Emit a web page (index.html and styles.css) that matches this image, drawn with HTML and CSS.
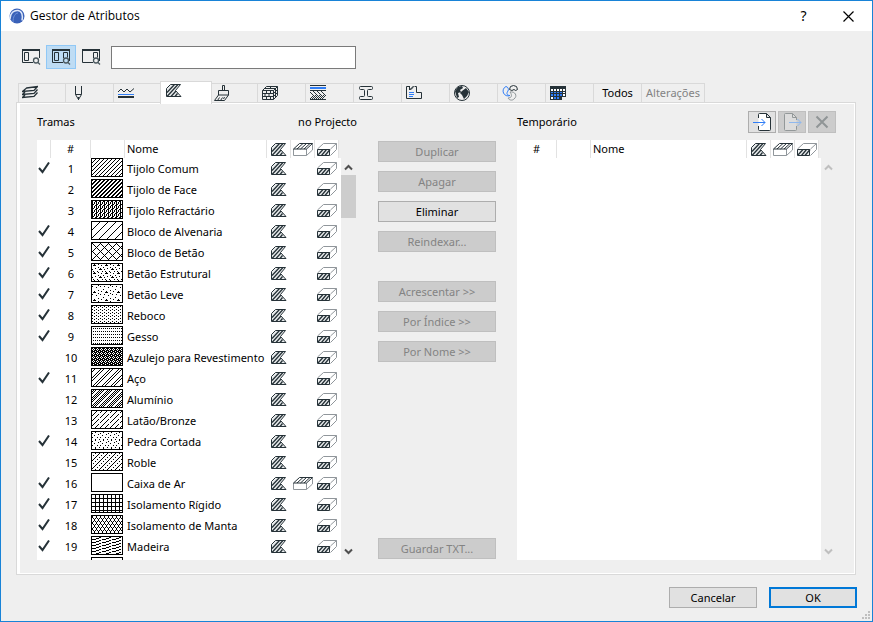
FILE: index.html
```html
<!DOCTYPE html>
<html lang="pt">
<head>
<meta charset="utf-8">
<title>Gestor de Atributos</title>
<link rel="stylesheet" href="styles.css">
</head>
<body>
<svg class="defs" aria-hidden="true">
  <defs>
    <symbol id="check" viewBox="0 0 12 12"><path d="M1 6l3.500 4L11 .5" fill="none" stroke="#263238" stroke-width="2"/></symbol>
    <symbol id="hatch" viewBox="0 0 16 13">
      <path d="M4.500.5h10l-5 6 5.500 6H.5v-8z" fill="#e9eced" stroke="#263238"/>
      <path d="M1 8.500l7.500-8M1 12.500l11-12M5 12.500l5-5.500M9 12.500l2.500-3" fill="none" stroke="#263238" stroke-width="1.300"/>
    </symbol>
    <symbol id="cover" viewBox="0 0 20 13">
      <path d="M.5 6v6.500h13V6M13.500 12.500l6-5.500V.5" fill="#fff" stroke="#90969b"/>
      <path d="M6.500.5h13l-6 5.500H.5z" fill="#fff" stroke="#263238"/>
      <path d="M4 6l6-5.500M7.500 6l6-5.500M11 6l6-5.500" stroke="#263238"/>
    </symbol>
    <symbol id="cut" viewBox="0 0 20 13">
      <path d="M.5 6l6-5.500h13v6l-6 6M13.500 6l6-5.500" fill="#fff" stroke="#90969b"/>
      <path d="M.5 6.500h12v6H.5z" fill="#e9eced" stroke="#263238"/>
      <path d="M1 12l5-5.500M4.500 12.500l5-6M8 12.500l5-6" stroke="#263238" stroke-width="1.300"/>
    </symbol>
    <symbol id="up" viewBox="0 0 9 7"><path d="M1 5.500l3.500-3.500L8 5.500" fill="none" stroke="currentColor" stroke-width="2"/></symbol>
    <symbol id="down" viewBox="0 0 9 7"><path d="M1 1.500L4.500 5 8 1.500" fill="none" stroke="currentColor" stroke-width="2"/></symbol>

    <pattern id="f1" width="4" height="4" patternUnits="userSpaceOnUse"><path d="M0 3h1v1H0zM1 2h1v1H1zM2 1h1v1H2zM3 0h1v1H3z"/></pattern>
    <pattern id="f2" width="4" height="4" patternUnits="userSpaceOnUse"><path d="M0 3h2v1H0zM1 2h2v1H1zM2 1h2v1H2zM3 0h1v1H3zM0 0h1v1H0z"/></pattern>
    <pattern id="f3" width="4" height="4" patternUnits="userSpaceOnUse"><path d="M0 0h1v4H0zM1 3h1v1H1zM2 1h1v2H2zM3 0h1v1H3z"/></pattern>
    <pattern id="f4" width="8" height="8" patternUnits="userSpaceOnUse"><path d="M0 7h1v1H0zM1 6h1v1H1zM2 5h1v1H2zM3 4h1v1H3zM4 3h1v1H4zM5 2h1v1H5zM6 1h1v1H6zM7 0h1v1H7z"/></pattern>
    <pattern id="f5" width="8" height="8" patternUnits="userSpaceOnUse"><path d="M0 0h1v1H0zM1 1h1v1H1zM2 2h1v1H2zM3 3h1v1H3zM4 4h1v1H4zM5 5h1v1H5zM6 6h1v1H6zM7 7h1v1H7zM1 7h1v1H1zM2 6h1v1H2zM3 5h1v1H3zM5 3h1v1H5zM6 2h1v1H6zM7 1h1v1H7z"/></pattern>
    <pattern id="f6" width="12" height="8" patternUnits="userSpaceOnUse"><path d="M1 1h3v1H1zM2 0h1v1H2zM6 0h1v1H6zM9 1h1v1H9zM7 5h3v1H7zM8 4h1v1H8zM11 3h1v1h-1zM0 5h1v1H0zM3 4h1v1H3zM5 7h1v1H5zM1 7h1v1H1zM6 3h1v1H6zM10 7h1v1h-1z"/></pattern>
    <pattern id="f7" width="12" height="8" patternUnits="userSpaceOnUse"><path d="M2 6h1v1H2zM1 7h3v1H1zM8 1h1v1H8zM9 6h1v1H9zM6 5h1v1H6zM0 1h1v1H0zM4 2h1v1H4zM11 4h1v1h-1zM6 0h1v1H6z"/></pattern>
    <pattern id="f8" width="4" height="3" patternUnits="userSpaceOnUse"><path d="M0 0h1v1H0zM2 1h1v1H2z"/></pattern>
    <pattern id="f9" width="2" height="3" patternUnits="userSpaceOnUse"><path d="M1 1h1v1H1z"/></pattern>
    <pattern id="f10" width="4" height="4" patternUnits="userSpaceOnUse"><path d="M0 0h4v4H0z"/><path d="M1 0h1v1H1zM0 1h1v1H0zM2 1h1v1H2zM1 2h1v1H1zM3 3h1v1H3z" fill="#fff"/></pattern>
    <pattern id="f11" width="9" height="9" patternUnits="userSpaceOnUse"><path d="M0 8h1v1H0zM1 7h1v1H1zM2 6h1v1H2zM3 5h1v1H3zM4 4h1v1H4zM5 3h1v1H5zM6 2h1v1H6zM7 1h1v1H7zM8 0h1v1H8zM3 8h1v1H3zM4 7h1v1H4zM5 6h1v1H5zM6 5h1v1H6zM7 4h1v1H7zM8 3h1v1H8zM0 2h1v1H0zM1 1h1v1H1zM2 0h1v1H2z"/></pattern>
    <pattern id="f12" width="8" height="8" patternUnits="userSpaceOnUse"><path d="M0 7h1v1H0zM1 6h1v1H1zM2 5h1v1H2zM3 4h1v1H3zM4 3h1v1H4zM5 2h1v1H5zM6 1h1v1H6zM7 0h1v1H7zM2 7h1v1H2zM3 6h1v1H3zM4 5h1v1H4zM5 4h1v1H5zM6 3h1v1H6zM7 2h1v1H7zM0 1h1v1H0zM1 0h1v1H1zM4 7h1v1H4zM5 6h1v1H5zM6 5h1v1H6zM7 4h1v1H7zM0 3h1v1H0zM1 2h1v1H1zM2 1h1v1H2zM3 0h1v1H3z"/></pattern>
    <pattern id="f13" width="10" height="5" patternUnits="userSpaceOnUse"><path d="M0 4h1v1H0zM1 3h1v1H1zM2 2h1v1H2zM3 1h1v1H3zM4 0h1v1H4zM5 4h1v1H5zM6 3h1v1H6zM8 1h1v1H8zM9 0h1v1H9z"/></pattern>
    <pattern id="f14" width="8" height="8" patternUnits="userSpaceOnUse"><path d="M0 1h1v1H0zM3 0h1v1H3zM6 2h1v1H6zM2 3h1v1H2zM5 5h1v1H5zM0 5h1v1H0zM3 7h1v1H3zM7 7h1v1H7z"/></pattern>
    <pattern id="f15" width="8" height="8" patternUnits="userSpaceOnUse"><path d="M0 7h1v1H0zM1 6h1v1H1zM2 5h1v1H2zM3 4h1v1H3zM4 3h1v1H4zM5 2h1v1H5zM6 1h1v1H6zM7 0h1v1H7zM1 2h1v1H1zM3 0h1v1H3zM5 6h1v1H5zM7 4h1v1H7z"/></pattern>
    <pattern id="f17" width="4" height="4" patternUnits="userSpaceOnUse"><path d="M3 0h1v4H3zM0 3h4v1H0z"/></pattern>
    <pattern id="f18" width="4" height="6" patternUnits="userSpaceOnUse"><path d="M0 0h1v2H0zM1 2h1v1H1zM2 3h1v2H2zM1 5h1v1H1zM3 2h1v1H3zM3 5h1v1H3z"/></pattern>
    <pattern id="f19" width="10" height="3" patternUnits="userSpaceOnUse"><path d="M0 2h4v1H0zM4 1h3v1H4zM7 0h2v1H7z"/></pattern>
  </defs>
</svg>

<div class="window">
  <header class="titlebar">
    <svg class="logo" viewBox="0 0 16 16"><circle cx="8" cy="8" r="7.500" fill="#3961b8"/><path d="M1 11C1 5 5 2 9 2.500c4 .5 5 5 4 10" fill="none" stroke="#dfe8fa" stroke-width="1.500"/><path d="M4 14C4 9 6 5 9 5" fill="none" stroke="#6f92da"/></svg>
    <h1>Gestor de Atributos</h1>
    <button class="caption help" type="button">?</button>
    <button class="caption" type="button" aria-label="Fechar"><svg width="11" height="11" viewBox="0 0 11 11"><path d="M.5.5l10 10M10.500.5l-10 10" stroke="#000" stroke-width="1.200"/></svg></button>
  </header>

  <div class="toolbar">
    <button class="view" type="button" aria-label="Esquerda"><svg viewBox="0 0 19 16"><path d="M11 13.500H.5V1h17v8" /><path d="M0 1h18" class="thick"/><path d="M2.500 3.500h4v8h-4z"/><g class="lens"><circle cx="14" cy="11.500" r="2.500"/><path d="M16 13.500l2 2"/></g></svg></button>
    <button class="view on" type="button" aria-label="Ambos"><svg viewBox="0 0 19 16"><path d="M11 13.500H.5V1h17v11"/><path d="M0 1h18" class="thick"/><path d="M2.500 3.500h4v8h-4zM11.500 9V3.500h4v5"/><g class="lens"><circle cx="14" cy="11.500" r="2.500"/><path d="M16 13.500l2 2"/></g></svg></button>
    <button class="view" type="button" aria-label="Direita"><svg viewBox="0 0 19 16"><path d="M11 13.500H.5V1h17v11"/><path d="M0 1h18" class="thick"/><path d="M11.500 9V3.500h4v5"/><g class="lens"><circle cx="14" cy="11.500" r="2.500"/><path d="M16 13.500l2 2"/></g></svg></button>
    <input class="search" type="text" aria-label="Procurar">
  </div>

  <nav class="tabs">
    <button class="tab first" type="button" aria-label="Camadas"><svg viewBox="0 0 16 16"><path d="M4.500 3l11-1.500-3.500 4-11.500 1zM3 7L.5 9.500l11.500-1 3.500-4M3 10L.5 12.500l11.500-1 3.500-4" stroke-width="1.300"/></svg></button>
    <button class="tab" type="button" aria-label="Canetas"><svg viewBox="0 0 16 16"><path d="M5.500 1v8.500l3 5 3-5V1M5.500 9.500h6"/><path d="M8.500 12v3"/></svg></button>
    <button class="tab" type="button" aria-label="Linhas"><svg viewBox="0 0 16 16"><path d="M0 7l3-3 3 3 3-3 3 3 4-3.500"/><path d="M0 9.500h16" class="blue"/><path d="M0 12h16" class="thick"/></svg></button>
    <button class="tab active" type="button" aria-label="Tramas"><svg viewBox="0 0 16 16"><use href="#hatch" width="16" height="13" y="1"/></svg></button>
    <button class="tab" type="button" aria-label="Superfícies"><svg viewBox="0 0 16 16"><path d="M8.500 5.500v-5h2v5M4.500 10V5.500h10V10zM4.500 10l-4 5.500h10l4-5.500M3.500 15.500l2-3M6.500 15.500l2-3M9.500 14l1-2"/></svg></button>
    <button class="tab" type="button" aria-label="Materiais"><svg viewBox="0 0 16 16"><path d="M.5 5.500h11v9H.5zM.5 5.500l4-4h11l-4 4M15.500 1.500v9l-4 4M.5 8.500h11l4-4M.5 11.500h11l4-4M4.500 5.500v3M8.500 5.500v3M3 8.500v3M7 8.500v3M4.500 11.500v3M8.500 11.500v3M13.500 3.500v9M3 3.500h10M7.500 3.500l2-2"/></svg></button>
    <button class="tab" type="button" aria-label="Compostos"><svg viewBox="0 0 16 16"><path d="M0 .5h16M0 5.500h16M0 14.500h16"/><path d="M0 3h16" class="blue thick"/><path d="M0 7l3 3M3 6l4 4M7 6l4 4M11 6l4 4M0 14l4-4M4 14l4-4M8 14l4-4M12 14l4-4M2 14l4-4M6 14l4-4M10 14l4-4"/></svg></button>
    <button class="tab" type="button" aria-label="Perfis"><svg viewBox="0 0 16 16"><path d="M1.500 2.500q0-1 1-1h11q1 0 1 1v1q0 1-1 1h-3q-1 0-1 1v5q0 1 1 1h3q1 0 1 1v1q0 1-1 1h-11q-1 0-1-1v-1q0-1 1-1h3q1 0 1-1v-5q0-1-1-1h-3q-1 0-1-1z"/></svg></button>
    <button class="tab" type="button" aria-label="Zonas"><svg viewBox="0 0 16 16"><path d="M3.500 1.500h-3v12h15v-6h-5v-6h-2M3.500 1v4l4-4M3.500 4.500q3 0 4-3"/><path d="M3 7.500h5M3 9.500h5M3 11.500h4" class="blue"/></svg></button>
    <button class="tab" type="button" aria-label="Cidades"><svg viewBox="0 0 16 16"><circle cx="8" cy="8" r="7.500"/><path class="solid" d="M1 6l3-4 4-1 1 2-3 2 1 2-3 1 1 4-2 1zM8 6l4-3 3 4-2 4-3 3-2-4-2-2z"/></svg></button>
    <button class="tab" type="button" aria-label="Categorias"><svg viewBox="0 0 16 16"><path class="blue" d="M4 1.500a4 4 0 1 0 4 9c-3 0-4-2-2-4.500C7 4 6 2 4 1.500z"/><path d="M7.500 4.500a4 4 0 0 1 8 0q-2 2-3.500 0-2 2-4.500 0z"/><path class="gray" d="M8 7c5-1 8 4 4 7-2 2-5 1-6-1 3 0 5-2 2-6z"/></svg></button>
    <button class="tab" type="button" aria-label="Horários"><svg viewBox="0 0 16 16"><path d="M0 1h16v11h-4v3H0z" class="solid"/><path d="M1 4h2v2H1zM4 4h2v2H4zM7 4h2v2H7zM10 4h2v2h-2zM13 4h2v2h-2zM13 7h2v1h-2zM1 12h2v2H1zM13 9h2v2h-2z" fill="#fff" stroke="none"/><path d="M1 7h2v1H1zM4 7h2v1H4zM7 7h2v1H7zM10 7h2v1h-2zM1 9h2v2H1zM4 9h2v2H4zM7 9h2v2H7zM10 9h2v2h-2zM4 12h2v2H4zM7 12h2v2H7z" fill="#2f7df6" stroke="none"/></svg></button>
    <button class="tab text" type="button">Todos</button>
    <button class="tab text last" type="button" disabled>Alterações</button>
  </nav>

  <main class="panel">
    <section class="side">
      <div class="side-head"><h2>Tramas</h2><h2>no Projecto</h2></div>
      <div class="list">
        <div class="viewport">
          <table>
            <colgroup><col class="c-check"><col class="c-num"><col class="c-swatch"><col><col class="c-icon"><col class="c-icon"><col class="c-icon"><col class="c-end"></colgroup>
            <thead><tr><th></th><th>#</th><th></th><th class="name">Nome</th><th><svg class="hatch"><use href="#hatch"/></svg></th><th><svg class="box"><use href="#cover"/></svg></th><th><svg class="box"><use href="#cut"/></svg></th><th class="end"></th></tr></thead>
            <tbody>
              <tr><td><svg class="check"><use href="#check"/></svg></td><td>1</td><td class="fill"><svg class="swatch"><rect fill="url(#f1)"/></svg></td><td class="name">Tijolo Comum</td><td><svg class="hatch"><use href="#hatch"/></svg></td><td></td><td><svg class="box"><use href="#cut"/></svg></td><td></td></tr>
              <tr><td></td><td>2</td><td class="fill"><svg class="swatch"><rect fill="url(#f2)"/></svg></td><td class="name">Tijolo de Face</td><td><svg class="hatch"><use href="#hatch"/></svg></td><td></td><td><svg class="box"><use href="#cut"/></svg></td><td></td></tr>
              <tr><td></td><td>3</td><td class="fill"><svg class="swatch"><rect fill="url(#f3)"/></svg></td><td class="name">Tijolo Refractário</td><td><svg class="hatch"><use href="#hatch"/></svg></td><td></td><td><svg class="box"><use href="#cut"/></svg></td><td></td></tr>
              <tr><td><svg class="check"><use href="#check"/></svg></td><td>4</td><td class="fill"><svg class="swatch"><rect fill="url(#f4)"/></svg></td><td class="name">Bloco de Alvenaria</td><td><svg class="hatch"><use href="#hatch"/></svg></td><td></td><td><svg class="box"><use href="#cut"/></svg></td><td></td></tr>
              <tr><td><svg class="check"><use href="#check"/></svg></td><td>5</td><td class="fill"><svg class="swatch"><rect fill="url(#f5)"/></svg></td><td class="name">Bloco de Betão</td><td><svg class="hatch"><use href="#hatch"/></svg></td><td></td><td><svg class="box"><use href="#cut"/></svg></td><td></td></tr>
              <tr><td><svg class="check"><use href="#check"/></svg></td><td>6</td><td class="fill"><svg class="swatch"><rect fill="url(#f6)"/></svg></td><td class="name">Betão Estrutural</td><td><svg class="hatch"><use href="#hatch"/></svg></td><td></td><td><svg class="box"><use href="#cut"/></svg></td><td></td></tr>
              <tr><td><svg class="check"><use href="#check"/></svg></td><td>7</td><td class="fill"><svg class="swatch"><rect fill="url(#f7)"/></svg></td><td class="name">Betão Leve</td><td><svg class="hatch"><use href="#hatch"/></svg></td><td></td><td><svg class="box"><use href="#cut"/></svg></td><td></td></tr>
              <tr><td><svg class="check"><use href="#check"/></svg></td><td>8</td><td class="fill"><svg class="swatch"><rect fill="url(#f8)"/></svg></td><td class="name">Reboco</td><td><svg class="hatch"><use href="#hatch"/></svg></td><td></td><td><svg class="box"><use href="#cut"/></svg></td><td></td></tr>
              <tr><td><svg class="check"><use href="#check"/></svg></td><td>9</td><td class="fill"><svg class="swatch"><rect fill="url(#f9)"/></svg></td><td class="name">Gesso</td><td><svg class="hatch"><use href="#hatch"/></svg></td><td></td><td><svg class="box"><use href="#cut"/></svg></td><td></td></tr>
              <tr><td></td><td>10</td><td class="fill"><svg class="swatch"><rect fill="url(#f10)"/></svg></td><td class="name">Azulejo para Revestimento</td><td><svg class="hatch"><use href="#hatch"/></svg></td><td></td><td><svg class="box"><use href="#cut"/></svg></td><td></td></tr>
              <tr><td><svg class="check"><use href="#check"/></svg></td><td>11</td><td class="fill"><svg class="swatch"><rect fill="url(#f11)"/></svg></td><td class="name">Aço</td><td><svg class="hatch"><use href="#hatch"/></svg></td><td></td><td><svg class="box"><use href="#cut"/></svg></td><td></td></tr>
              <tr><td></td><td>12</td><td class="fill"><svg class="swatch"><rect fill="url(#f12)"/></svg></td><td class="name">Alumínio</td><td><svg class="hatch"><use href="#hatch"/></svg></td><td></td><td><svg class="box"><use href="#cut"/></svg></td><td></td></tr>
              <tr><td></td><td>13</td><td class="fill"><svg class="swatch"><rect fill="url(#f13)"/></svg></td><td class="name">Latão/Bronze</td><td><svg class="hatch"><use href="#hatch"/></svg></td><td></td><td><svg class="box"><use href="#cut"/></svg></td><td></td></tr>
              <tr><td><svg class="check"><use href="#check"/></svg></td><td>14</td><td class="fill"><svg class="swatch"><rect fill="url(#f14)"/></svg></td><td class="name">Pedra Cortada</td><td><svg class="hatch"><use href="#hatch"/></svg></td><td></td><td><svg class="box"><use href="#cut"/></svg></td><td></td></tr>
              <tr><td></td><td>15</td><td class="fill"><svg class="swatch"><rect fill="url(#f15)"/></svg></td><td class="name">Roble</td><td><svg class="hatch"><use href="#hatch"/></svg></td><td></td><td><svg class="box"><use href="#cut"/></svg></td><td></td></tr>
              <tr><td><svg class="check"><use href="#check"/></svg></td><td>16</td><td class="fill"><svg class="swatch"></svg></td><td class="name">Caixa de Ar</td><td><svg class="hatch"><use href="#hatch"/></svg></td><td><svg class="box"><use href="#cover"/></svg></td><td><svg class="box"><use href="#cut"/></svg></td><td></td></tr>
              <tr><td><svg class="check"><use href="#check"/></svg></td><td>17</td><td class="fill"><svg class="swatch"><rect fill="url(#f17)"/></svg></td><td class="name">Isolamento Rígido</td><td><svg class="hatch"><use href="#hatch"/></svg></td><td></td><td><svg class="box"><use href="#cut"/></svg></td><td></td></tr>
              <tr><td><svg class="check"><use href="#check"/></svg></td><td>18</td><td class="fill"><svg class="swatch"><rect fill="url(#f18)"/></svg></td><td class="name">Isolamento de Manta</td><td><svg class="hatch"><use href="#hatch"/></svg></td><td></td><td><svg class="box"><use href="#cut"/></svg></td><td></td></tr>
              <tr><td><svg class="check"><use href="#check"/></svg></td><td>19</td><td class="fill"><svg class="swatch"><rect fill="url(#f19)"/></svg></td><td class="name">Madeira</td><td><svg class="hatch"><use href="#hatch"/></svg></td><td></td><td><svg class="box"><use href="#cut"/></svg></td><td></td></tr>
              <tr><td></td><td></td><td class="fill"><svg class="swatch"></svg></td><td></td><td></td><td></td><td></td><td></td></tr>
            </tbody>
          </table>
        </div>
        <div class="scroll"><svg class="arrow"><use href="#up"/></svg><div class="thumb"></div><svg class="arrow"><use href="#down"/></svg></div>
      </div>
    </section>

    <div class="actions">
      <button class="btn" type="button" disabled>Duplicar</button>
      <button class="btn" type="button" disabled>Apagar</button>
      <button class="btn" type="button">Eliminar</button>
      <button class="btn" type="button" disabled>Reindexar...</button>
      <button class="btn group" type="button" disabled>Acrescentar &gt;&gt;</button>
      <button class="btn" type="button" disabled>Por Índice &gt;&gt;</button>
      <button class="btn" type="button" disabled>Por Nome &gt;&gt;</button>
      <button class="btn bottom" type="button" disabled>Guardar TXT...</button>
    </div>

    <section class="side">
      <div class="side-head"><h2>Temporário</h2>
        <div class="files">
          <button class="btn file" type="button" aria-label="Abrir"><svg width="20" height="20" viewBox="0 0 20 20"><path d="M6.500 6V2.500q0-1 1-1h7l4 4v12q0 1-1 1h-10q-1 0-1-1V14M14.500 1.500v4h4" fill="#fff" stroke="#263238"/><path d="M1 10.500h12M9.500 7l3.500 3.500-3.500 3.500" fill="none" stroke="#2f7df6"/></svg></button>
          <button class="btn file" type="button" aria-label="Exportar" disabled><svg width="20" height="20" viewBox="0 0 20 20"><path d="M14.500 8V5.500l-4-4h-7q-1 0-1 1v15q0 1 1 1h10q1 0 1-1V14M10.500 1.500v4h4" fill="#dcdcdc" stroke="#939899"/><path d="M7 10.500h12M15.500 7l3.500 3.500-3.500 3.500" fill="none" stroke="#8fb8ee"/></svg></button>
          <button class="btn file" type="button" aria-label="Remover" disabled><svg width="20" height="20" viewBox="0 0 20 20"><path d="M4.500 4.500l11 11M15.500 4.500l-11 11" stroke="#909596" stroke-width="2"/></svg></button>
        </div>
      </div>
      <div class="list">
        <div class="viewport">
          <table>
            <colgroup><col class="c-num"><col class="c-swatch"><col><col class="c-icon"><col class="c-icon"><col class="c-icon"><col class="c-end"></colgroup>
            <thead><tr><th>#</th><th></th><th class="name">Nome</th><th><svg class="hatch"><use href="#hatch"/></svg></th><th><svg class="box"><use href="#cover"/></svg></th><th><svg class="box"><use href="#cut"/></svg></th><th class="end"></th></tr></thead>
          </table>
        </div>
        <div class="scroll off"><svg class="arrow"><use href="#up"/></svg><svg class="arrow"><use href="#down"/></svg></div>
      </div>
    </section>
  </main>

  <footer class="footer">
    <button class="btn wide" type="button">Cancelar</button>
    <button class="btn wide default" type="button">OK</button>
    <svg class="grip" viewBox="0 0 8 8"><path d="M6 0h2v2H6zM3 3h2v2H3zM6 3h2v2H6zM0 6h2v2H0zM3 6h2v2H3zM6 6h2v2H6z" fill="#bfbfbf"/></svg>
  </footer>
</div>
</body>
</html>
```
FILE: styles.css
```css
* { box-sizing: border-box; }

body {
  margin: 0;
  font: 11px/16px "Noto Sans", "Open Sans", sans-serif;
  color: #000;
}

button, input { font: inherit; color: inherit; padding: 0; margin: 0; }
h1, h2 { margin: 0; font-weight: 400; }
svg { display: block; }
.defs { position: absolute; width: 0; height: 0; }

.window {
  position: relative;
  display: flex;
  flex-direction: column;
  height: 100vh;
  border: 1px solid #1883d7;
  background: #efefef;
}

.titlebar {
  display: flex;
  align-items: center;
  height: 30px;
  padding: 0 1px 0 8px;
  background: #fff;
}
.logo { width: 16px; height: 16px; }
.titlebar h1 {
  flex: 1;
  margin-left: 5px;
  font: 12px/16px "Noto Sans", "Open Sans", sans-serif;
  font-family: "Open Sans", sans-serif;
}
.caption {
  display: flex;
  align-items: center;
  justify-content: center;
  width: 45px;
  height: 29px;
  border: 0;
  background: none;
}
.help { font-size: 14px; }

.toolbar {
  display: flex;
  align-items: center;
  padding: 14px 15px 0;
}
.view {
  width: 30px;
  height: 24px;
  padding-left: 5px;
  border: 1px solid transparent;
  background: none;
}
.view.on { border-color: #90c8f6; background: #bedcf4; }
.view svg { width: 19px; height: 16px; fill: none; stroke: #263238; }
.view .lens { stroke: #48565c; stroke-width: 1.300; }
.search {
  width: 245px;
  height: 23px;
  margin-left: 5px;
  padding: 0 4px;
  border: 1px solid #7a7a7a;
  background: #fff;
}

.tabs {
  display: flex;
  align-items: flex-end;
  margin: 12px 17px 0;
  padding-top: 2px;
}
.tab {
  width: 48px;
  height: 19px;
  padding: 0 0 0 4px;
  border: 1px solid #d9d9d9;
  border-width: 1px 0 0 1px;
  background: #efefef;
}
.tab.first { width: 47px; padding-left: 3px; }
.tab.active {
  position: relative;
  width: 52px;
  height: 23px;
  margin: -2px -3px -2px -1px;
  padding-left: 5px;
  padding-bottom: 4px;
  border-right-width: 1px;
  background: #fff;
}
.tab.text { padding: 0; text-align: center; }
.tab.last { width: 64px; border-right-width: 1px; color: #838383; }
.tab svg { width: 16px; height: 16px; fill: none; stroke: #263238; }
.tab .blue { stroke: #2f7df6; }
.tab .gray { stroke: #8f9699; }
.tab .solid { fill: #263238; stroke: none; }
.thick { stroke-width: 2; }

.panel {
  display: grid;
  grid-template-columns: 1fr 118px 1fr;
  gap: 21px;
  flex: 1;
  min-height: 0;
  margin: 0 16px 0 15px;
  padding: 8px 18px 14px 20px;
  border: 1px solid #d9d9d9;
  box-shadow: inset 3px 0 #fff, inset 0 1px #fff, inset -1px -1px #fff;
}
.side { display: flex; flex-direction: column; min-width: 0; min-height: 0; }
.side-head {
  display: flex;
  align-items: center;
  justify-content: space-between;
  height: 22px;
  margin-bottom: 7px;
}
.side-head h2 { font-size: 11px; }
.files { display: flex; gap: 2px; padding-right: 1px; }

.list { display: flex; flex: 1; min-height: 0; }
.viewport { flex: 1; overflow: hidden; background: #fff; }
table { width: 100%; border-collapse: separate; border-spacing: 0; table-layout: fixed; }
th, td { padding: 0; text-align: center; font-weight: 400; white-space: nowrap; }
th { height: 18px; border-right: 1px solid #e2e2e2; }
th.end { border: 0; background: #efefef; }
td { height: 21px; }
.name { padding-left: 2px; text-align: left; }
.fill { vertical-align: top; }
.c-check { width: 14px; }
.c-num { width: 40px; }
.c-swatch { width: 34px; }
.c-icon { width: 24px; }
.c-end { width: 2px; }

td:first-child { padding-bottom: 1px; }
.check { width: 12px; height: 12px; margin: 0 0 0 1px; }
.hatch { width: 16px; height: 13px; margin: 0 auto; }
.box { width: 20px; height: 13px; margin: 0 auto; }
.swatch { width: 32px; height: 19px; border: 1px solid #000; }
.swatch rect { width: 100%; height: 100%; }

.scroll {
  display: flex;
  flex-direction: column;
  width: 16px;
  padding: 24px 0 5px;
  color: #505050;
}
.scroll.off { color: #bfbfbf; justify-content: space-between; }
.arrow { width: 9px; height: 7px; margin-left: 3px; }
.thumb { width: 15px; height: 43px; margin: 4px 0 auto; background: #cdcdcd; }

.actions {
  display: flex;
  flex-direction: column;
  gap: 9px;
  padding: 30px 0 1px;
}
.btn {
  height: 21px;
  border: 1px solid #adadad;
  background: #e1e1e1;
  line-height: 16px;
}
.btn:disabled { border-color: #bfbfbf; background: #ccc; color: #838383; }
.group { margin-top: 20px; }
.bottom { margin-top: auto; }
.file {
  display: flex;
  align-items: center;
  justify-content: center;
  width: 28px;
  height: 22px;
}

.footer {
  display: flex;
  justify-content: flex-end;
  gap: 12px;
  padding: 12px 15px 13px;
}
.wide { width: 88px; }
.default { border: 2px solid #0078d7; }
.grip { position: absolute; right: 2px; bottom: 2px; width: 8px; height: 8px; }
```
